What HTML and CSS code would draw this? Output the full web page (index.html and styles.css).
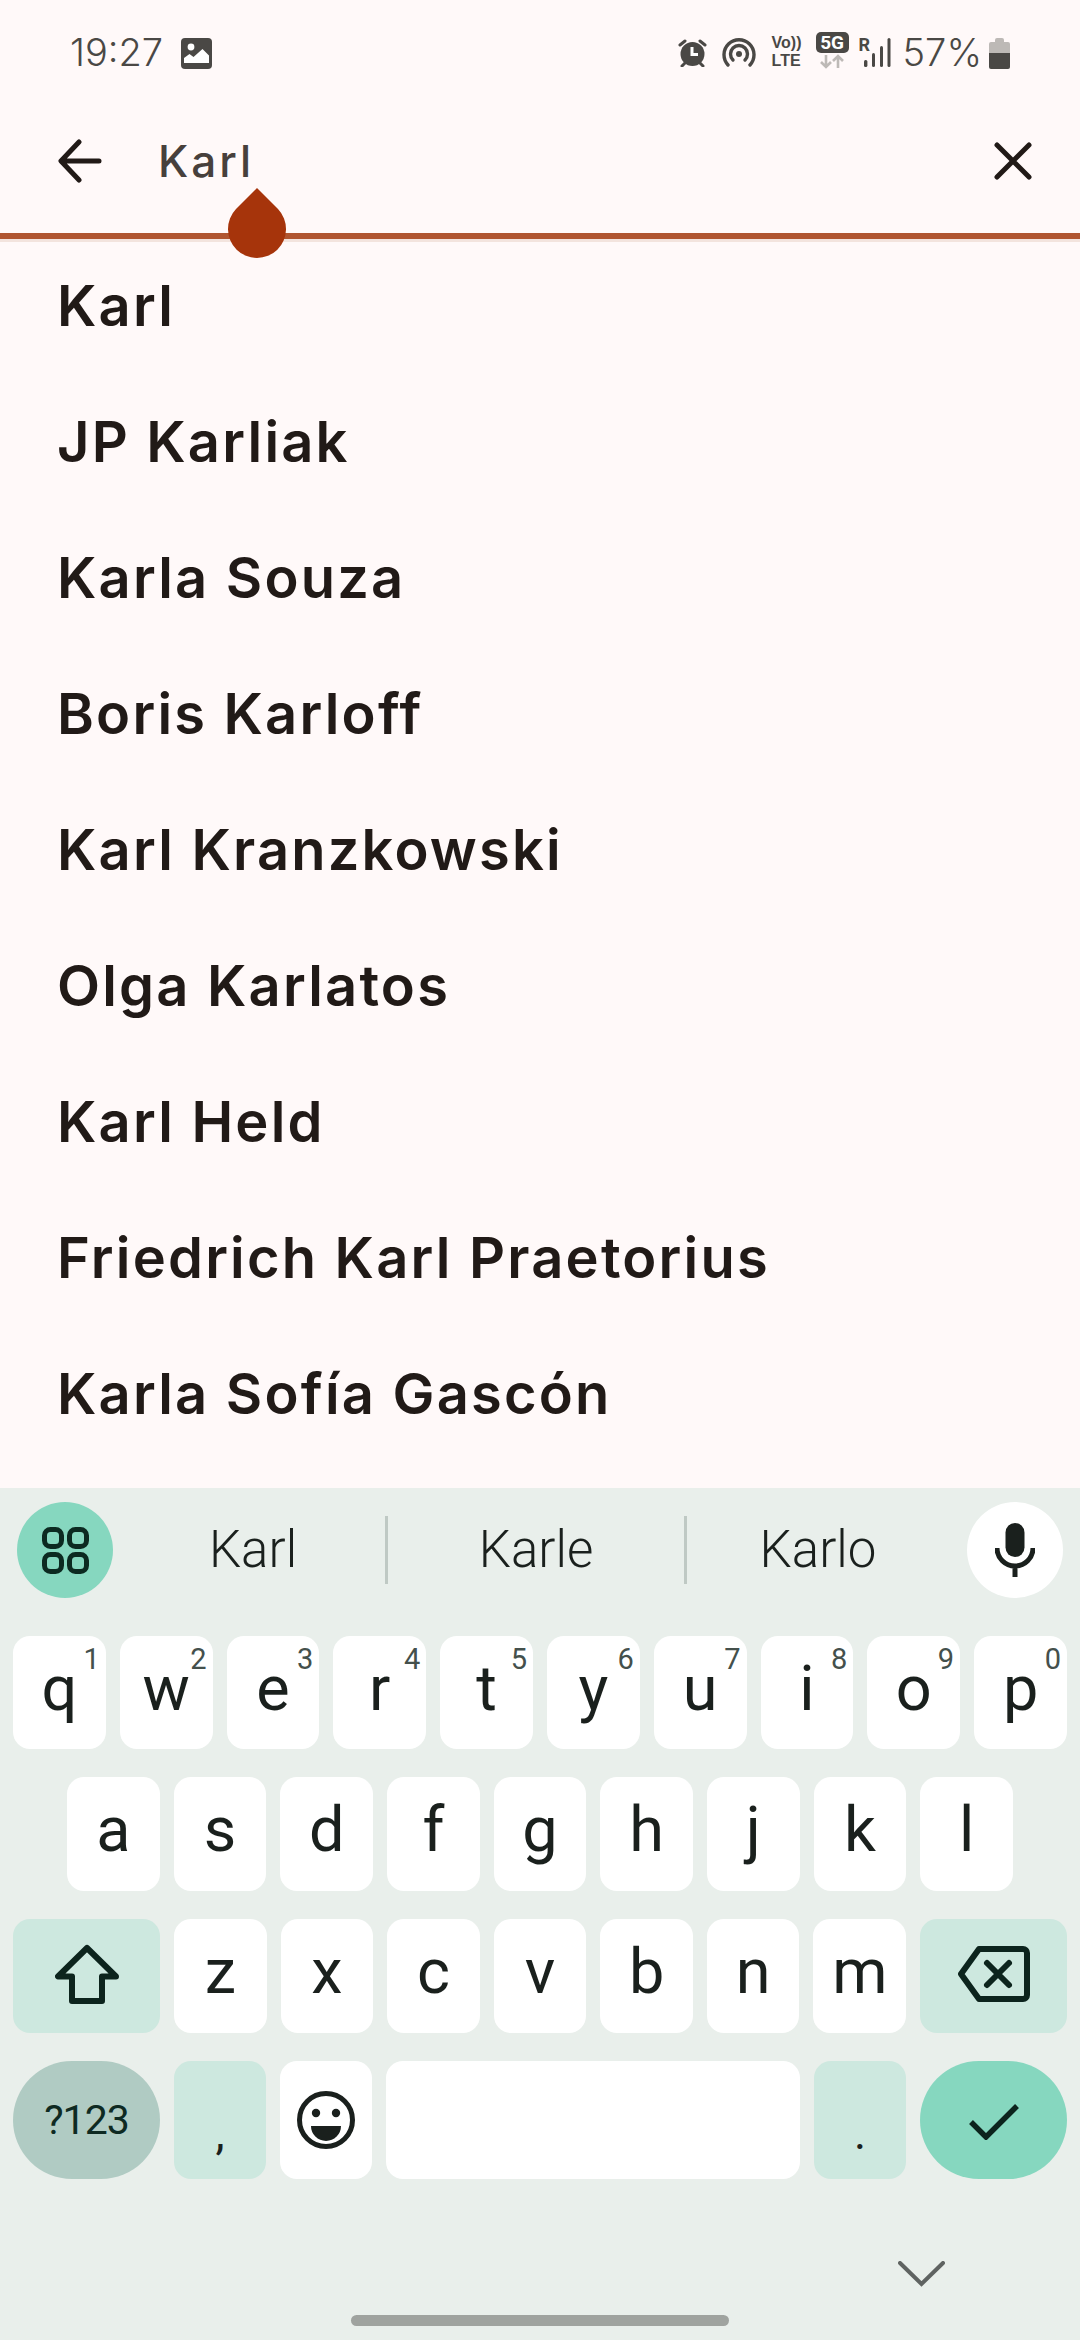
FILE: index.html
```html
<!DOCTYPE html>
<html lang="en">
<head>
  <meta charset="UTF-8" />
  <meta name="viewport" content="width=device-width, initial-scale=1.0"/>
  <title>Search people</title>
  <link rel="stylesheet" href="styles.css">
</head>
<body>
  <div class="screen">

    <div class="status-bar">
      <span class="clock">19:27</span>
      <svg class="ic-gallery" viewBox="0 0 31 31">
        <rect width="31" height="31" rx="4" fill="#4a4845"/>
        <circle cx="10" cy="9" r="3.4" fill="#fff"/>
        <path d="M3 25v-5l5.500-4 4 3 9-8 6.500 6.500v7.500z" fill="#fff"/>
      </svg>
      <span class="status-spacer"></span>
      <svg class="ic-alarm" viewBox="0 0 29 28">
        <circle cx="14.500" cy="15" r="12" fill="#4a4845"/>
        <path d="M2 6l5-4M27 6l-5-4M4 27l3-3M25 27l-3-3" stroke="#4a4845" stroke-width="3" fill="none" stroke-linecap="round"/>
        <path d="M14 8v7.500h6" stroke="#fff" stroke-width="3" fill="none"/>
      </svg>
      <svg class="ic-hotspot" viewBox="0 0 34 29">
        <path d="M6 27a15 15 0 1 1 22 0" stroke="#4a4845" stroke-width="3.400" fill="none" stroke-linecap="round"/>
        <path d="M11 22a8.500 8.500 0 1 1 12 0" stroke="#4a4845" stroke-width="3.400" fill="none" stroke-linecap="round"/>
        <circle cx="17" cy="16" r="3" fill="#4a4845"/>
      </svg>
      <span class="volte"><span>Vo))</span><span>LTE</span></span>
      <span class="net">
        <span class="net-badge">5G</span>
        <svg class="ic-updown" viewBox="0 0 24 15">
          <path d="M6 1v12M1 8l5 5 5-5M18 14V2M13 7l5-5 5 5" stroke="#bdb9b6" stroke-width="2.600" fill="none"/>
        </svg>
      </span>
      <span class="signal">
        <span class="roam">R</span>
        <svg class="ic-bars" viewBox="0 0 29 30">
          <rect x="2" y="22" width="3.400" height="7" rx="1.500" fill="#4a4845"/>
          <rect x="10" y="15" width="3" height="14" rx="1.500" fill="#4a4845"/>
          <rect x="18" y="8" width="3" height="21" rx="1.500" fill="#4a4845"/>
          <rect x="25.500" y="0" width="3" height="29" rx="1.500" fill="#4a4845"/>
        </svg>
      </span>
      <span class="percent">57%</span>
      <svg class="ic-battery" viewBox="0 0 21 32">
        <path d="M6 3a2 2 0 0 1 2-2h5a2 2 0 0 1 2 2v2h4a2 2 0 0 1 2 2v9H0V7a2 2 0 0 1 2-2h4z" fill="#bdb9b6"/>
        <path d="M0 16h21v14a2 2 0 0 1-2 2H2a2 2 0 0 1-2-2z" fill="#4a4845"/>
      </svg>
    </div>

    <div class="search-bar">
      <svg class="ic-back" viewBox="0 0 44 44">
        <path d="M41 22H4M21 3L3 22l18 19" stroke="#211a17" stroke-width="5" fill="none" stroke-linecap="round" stroke-linejoin="round"/>
      </svg>
      <span class="search-text">Karl</span>
      <svg class="ic-close" viewBox="0 0 38 38">
        <path d="M3 3l32 32M35 3L3 35" stroke="#211a17" stroke-width="5" fill="none" stroke-linecap="round"/>
      </svg>
    </div>

    <div class="search-line">
      <svg class="handle" viewBox="0 0 58 70">
        <path d="M29 0L50 21a29 29 0 1 1-42 0z" fill="#a6340b"/>
      </svg>
    </div>

    <ul class="results">
      <li>Karl</li>
      <li>JP Karliak</li>
      <li>Karla Souza</li>
      <li>Boris Karloff</li>
      <li>Karl Kranzkowski</li>
      <li>Olga Karlatos</li>
      <li>Karl Held</li>
      <li>Friedrich Karl Praetorius</li>
      <li>Karla Sofía Gascón</li>
    </ul>

    <div class="keyboard">
      <div class="strip">
        <span class="strip-btn apps">
          <svg class="ic-apps" viewBox="0 0 47 47">
            <rect x="2.500" y="2.500" width="17" height="17" rx="6" />
            <rect x="27.500" y="2.500" width="17" height="17" rx="6" />
            <rect x="2.500" y="27.500" width="17" height="17" rx="6" />
            <rect x="27.500" y="27.500" width="17" height="17" rx="6" />
          </svg>
        </span>
        <span class="word w1">Karl</span>
        <span class="word w2">Karle</span>
        <span class="word w3">Karlo</span>
        <span class="strip-btn mic">
          <svg class="ic-mic" viewBox="0 0 40 54">
            <rect x="10.500" y="0" width="19" height="34" rx="9.500" fill="#1a201d"/>
            <path d="M2 25a18 18 0 0 0 36 0M20 43v11" stroke="#1a201d" stroke-width="5" fill="none"/>
          </svg>
        </span>
      </div>

      <div class="row row-1">
        <span class="key">q<sup>1</sup></span>
        <span class="key">w<sup>2</sup></span>
        <span class="key">e<sup>3</sup></span>
        <span class="key">r<sup>4</sup></span>
        <span class="key">t<sup>5</sup></span>
        <span class="key">y<sup>6</sup></span>
        <span class="key">u<sup>7</sup></span>
        <span class="key">i<sup>8</sup></span>
        <span class="key">o<sup>9</sup></span>
        <span class="key">p<sup>0</sup></span>
      </div>
      <div class="row row-2">
        <span class="key">a</span>
        <span class="key">s</span>
        <span class="key">d</span>
        <span class="key">f</span>
        <span class="key">g</span>
        <span class="key">h</span>
        <span class="key">j</span>
        <span class="key">k</span>
        <span class="key">l</span>
      </div>
      <div class="row row-3">
        <span class="key wide mod">
          <svg class="ic-shift" viewBox="0 0 64 60">
            <path d="M32 4L3 32.500h14V57h30V32.500h14z" stroke="#0c241d" stroke-width="6" fill="none" stroke-linejoin="round"/>
          </svg>
        </span>
        <span class="key">z</span>
        <span class="key">x</span>
        <span class="key">c</span>
        <span class="key">v</span>
        <span class="key">b</span>
        <span class="key">n</span>
        <span class="key">m</span>
        <span class="key wide mod">
          <svg class="ic-del" viewBox="0 0 72 56">
            <path d="M21 3H65a4 4 0 0 1 4 4V49a4 4 0 0 1-4 4H21L3 28z" stroke="#0c241d" stroke-width="6" fill="none" stroke-linejoin="round"/>
            <path d="M29 17l22 22M51 17L29 39" stroke="#0c241d" stroke-width="6" fill="none" stroke-linecap="round"/>
          </svg>
        </span>
      </div>
      <div class="row row-4">
        <span class="key wide pill sym">?123</span>
        <span class="key mod punct">,</span>
        <span class="key">
          <svg class="ic-emoji" viewBox="0 0 58 58">
            <circle cx="29" cy="29" r="26.500" stroke="#1a201d" stroke-width="5" fill="none"/>
            <circle cx="19" cy="22" r="4.200" fill="#1a201d"/>
            <circle cx="39" cy="22" r="4.200" fill="#1a201d"/>
            <path d="M14 35h30a15 15 0 0 1-30 0z" fill="#1a201d"/>
          </svg>
        </span>
        <span class="key space"></span>
        <span class="key mod punct">.</span>
        <span class="key wide pill done">
          <svg class="ic-check" viewBox="0 0 50 37">
            <path d="M2 19l15 15L48 3" stroke="#0c241d" stroke-width="5.500" fill="none"/>
          </svg>
        </span>
      </div>

      <div class="nav-row">
        <svg class="ic-chevron" viewBox="0 0 47 26">
          <path d="M2 2l21.500 21L45 2" stroke="#5f6361" stroke-width="4" fill="none" stroke-linecap="round"/>
        </svg>
      </div>
      <div class="home-row"><span class="home-bar"></span></div>
    </div>

  </div>
</body>
</html>
```

FILE: styles.css
```css
* { box-sizing: border-box; margin:0; padding:0; }
html, body { height:100%; background:#fff9f9; }
body { font-family:'Roboto',sans-serif; overflow:hidden; }
.screen { width:1080px; height:2340px; display:flex; flex-direction:column; }
svg { display:block; flex:none; }

/* —— status bar —— */
.status-bar { height:104px; padding:33px 70px 0 70px; display:flex; align-items:flex-start; color:#4a4845; }
.clock { font-family:'Inter',sans-serif; font-size:38px; font-weight:300; line-height:38px; }
.ic-gallery { width:31px; height:31px; margin:5px 0 0 18px; }
.status-spacer { flex:1; }
.ic-alarm { width:29px; height:28px; margin-top:6px; }
.ic-hotspot { width:34px; height:29px; margin:5px 0 0 15px; }
.volte { display:flex; flex-direction:column; margin:1px 0 0 16px; width:32px; font-family:'Liberation Sans',sans-serif; font-size:16px; font-weight:700; line-height:18px; }
.net { display:flex; flex-direction:column; align-items:center; margin-left:12px; margin-top:-1px; }
.net-badge { width:33px; height:21px; background:#4a4845; border-radius:5px; color:#fff; font-size:19px; font-weight:700; line-height:21px; text-align:center; }
.ic-updown { width:24px; height:15px; margin-top:1px; }
.signal { display:flex; align-items:flex-start; margin-left:10px; position:relative; width:30px; height:34px; }
.roam { position:absolute; left:0; top:4px; font-size:18px; font-weight:700; line-height:16px; }
.ic-bars { width:29px; height:30px; margin:5px 0 0 3px; }
.percent { font-family:'Inter',sans-serif; font-size:38px; font-weight:300; line-height:38px; margin-left:14px; }
.ic-battery { width:21px; height:32px; margin:4px 0 0 7px; }

/* —— search —— */
.search-bar { height:129px; padding:0 48px 16px 58px; display:flex; align-items:center; }
.ic-back { width:44px; height:44px; }
.search-text { flex:1; margin-left:56px; font-family:'Inter',sans-serif; font-size:44px; font-weight:500; letter-spacing:3px; color:#47403c; }
.ic-close { width:38px; height:38px; }
.search-line { height:6px; flex:none; background:#b05530; box-shadow:0 3px 0 #f3e4de; position:relative; z-index:1; }
.handle { position:absolute; left:228px; top:-45px; width:58px; height:70px; }

.results { list-style:none; flex:1; padding-left:57px; }
.results li { height:136px; line-height:134px; font-family:'Inter',sans-serif; font-size:56px; font-weight:600; letter-spacing:2.200px; color:#211a17; }

/* —— keyboard —— */
.keyboard { height:852px; flex:none; background:#e9efeb; padding-top:14px; }
.strip { height:96px; padding:0 17px; display:flex; align-items:center; margin-bottom:38px; }
.strip-btn { width:96px; height:96px; flex:none; border-radius:50%; display:flex; align-items:center; justify-content:center; }
.apps { background:#86d7bf; }
.mic { background:#fff; margin-left:auto; }
.ic-apps { width:47px; height:47px; }
.ic-apps rect { fill:none; stroke:#0c2a21; stroke-width:5; }
.ic-mic { width:40px; height:54px; }
.word { height:68px; line-height:68px; text-align:center; font-size:51px; font-weight:300; color:#1a201d; }
.w1 { width:275px; padding-left:8px; border-right:3px solid #bfc9c4; }
.w2 { width:299px; border-right:3px solid #bfc9c4; }
.w3 { width:262px; }

.row { display:flex; gap:14px; margin-bottom:28px; }
.row-1 { height:113px; padding:0 13px; }
.row-2 { height:114px; padding:0 67px; }
.row-3 { height:114px; padding:0 13px; }
.row-4 { height:118px; padding:0 13px; margin-bottom:0; }
.key { flex:1 1 0; min-width:0; background:#fff; border-radius:17px; position:relative; display:flex; align-items:center; justify-content:center; padding-bottom:9px; font-size:63px; color:#1a201d; line-height:1; }
.key sup { position:absolute; top:6px; right:6px; font-size:29px; line-height:34px; color:#44504c; }
.key.wide { flex:0 0 147px; padding-bottom:0; }
.key.mod { background:#cde8df; }
.key.pill { border-radius:59px; }
.key.space { flex:0 0 414px; }
.row-4 .key { padding-bottom:0; }
.sym { font-size:41px; letter-spacing:-1px; color:#0e2a22; }
.key.sym { background:#b0cbc3; }
.key.done { background:#86d7bf; }
.punct { font-size:46px; }
.row-4 .punct { padding-top:26px; }
.ic-shift { width:64px; height:60px; margin-top:-4px; }
.ic-del { width:72px; height:56px; margin-top:-4px; }
.ic-emoji { width:58px; height:58px; }
.ic-check { width:50px; height:37px; margin-top:2px; }

.nav-row { height:82px; padding:82px 135px 0 0; display:flex; justify-content:flex-end; }
.ic-chevron { width:47px; height:26px; }
.home-row { height:60px; padding-top:54px; display:flex; justify-content:center; }
.home-bar { width:378px; height:11px; background:#9fa39f; border-radius:6px; }
```
